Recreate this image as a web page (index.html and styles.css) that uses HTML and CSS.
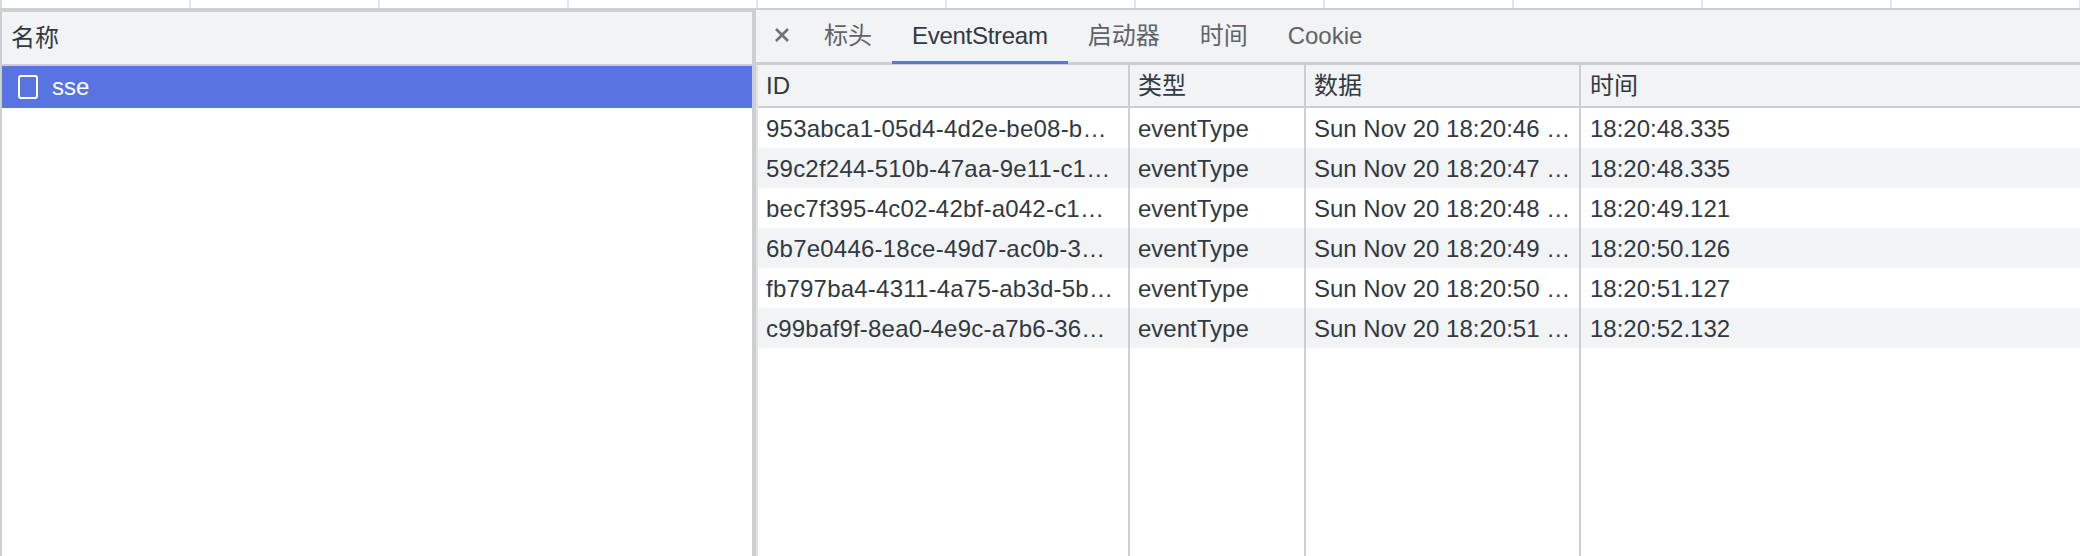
FILE: index.html
```html
<!DOCTYPE html>
<html lang="zh">
<head>
<meta charset="utf-8">
<title>Network</title>
<link rel="stylesheet" href="styles.css">
</head>
<body>
<div class="page">
  <div class="ruler">
    <i></i><i></i><i></i><i></i><i></i><i></i><i></i><i></i><i></i><i></i><i></i>
  </div>
  <div class="split">
    <section class="list">
      <div class="list-head">名称</div>
      <div class="list-row">
        <svg class="file" width="20" height="24" viewBox="0 0 20 24"><rect x="1" y="1" width="18" height="22" rx="2" fill="none" stroke="#fff" stroke-width="2"/></svg>
        <span>sse</span>
      </div>
    </section>
    <section class="detail">
      <div class="tabs">
        <svg class="close" width="14" height="14" viewBox="0 0 14 14"><path d="M1 1L13 13M13 1L1 13" stroke="#6e7379" stroke-width="2.6" fill="none"/></svg>
        <span class="tab first">标头</span>
        <span class="tab active">EventStream</span>
        <span class="tab">启动器</span>
        <span class="tab">时间</span>
        <span class="tab">Cookie</span>
      </div>
      <div class="table">
        <div class="row head"><div>ID</div><div>类型</div><div>数据</div><div>时间</div></div>
        <div class="row"><div class="id">953abca1-05d4-4d2e-be08-b…</div><div>eventType</div><div>Sun Nov 20 18:20:46 …</div><div>18:20:48.335</div></div>
        <div class="row alt"><div class="id">59c2f244-510b-47aa-9e11-c1…</div><div>eventType</div><div>Sun Nov 20 18:20:47 …</div><div>18:20:48.335</div></div>
        <div class="row"><div class="id">bec7f395-4c02-42bf-a042-c1…</div><div>eventType</div><div>Sun Nov 20 18:20:48 …</div><div>18:20:49.121</div></div>
        <div class="row alt"><div class="id">6b7e0446-18ce-49d7-ac0b-3…</div><div>eventType</div><div>Sun Nov 20 18:20:49 …</div><div>18:20:50.126</div></div>
        <div class="row"><div class="id">fb797ba4-4311-4a75-ab3d-5b…</div><div>eventType</div><div>Sun Nov 20 18:20:50 …</div><div>18:20:51.127</div></div>
        <div class="row alt"><div class="id">c99baf9f-8ea0-4e9c-a7b6-36…</div><div>eventType</div><div>Sun Nov 20 18:20:51 …</div><div>18:20:52.132</div></div>
        <div class="rest"><div></div><div></div><div></div><div></div></div>
      </div>
    </section>
  </div>
</div>
</body>
</html>
```
FILE: styles.css
```css
* { box-sizing: border-box; }
html, body { margin: 0; padding: 0; background: #fff; }
.page {
  width: 2080px;
  height: 556px;
  overflow: hidden;
  display: flex;
  flex-direction: column;
  font-family: "Liberation Sans", "Noto Sans CJK SC", sans-serif;
  font-size: 24px;
  color: #303942;
}
.ruler {
  height: 8px;
  flex: none;
  display: flex;
  border-left: 2px solid #d5d9ea;
}
.ruler i {
  flex: none;
  width: 189px;
  border-right: 2px solid #e4e5e8;
}
.split {
  flex: 1;
  display: flex;
  background: #cdced2;
  padding-top: 2px;
  min-height: 0;
}
.list {
  flex: none;
  width: 750px;
  margin: 2px 4px 0 2px;
  background: #fff;
}
.list-head {
  height: 54px;
  padding-left: 9px;
  line-height: 52px;
  background: #f1f3f4;
  border-bottom: 2px solid #cdced2;
}
.list-row {
  height: 42px;
  display: flex;
  align-items: center;
  gap: 14px;
  padding-left: 16px;
  background: #5874e0;
  color: #fff;
}
.file { flex: none; }
.detail {
  flex: 1;
  min-width: 0;
  display: flex;
  flex-direction: column;
  background: #fff;
}
.tabs {
  height: 55px;
  flex: none;
  display: flex;
  align-items: stretch;
  background: #f1f3f4;
  border-bottom: 3px solid #cdced2;
  color: #5f6368;
  padding-left: 19px;
}
.close { align-self: center; flex: none; margin-right: 35px; margin-bottom: 2px; }
.tab {
  padding: 0 20px;
  margin-bottom: -2px;
  border-bottom: 3px solid transparent;
  line-height: 52px;
}
.tab.first { padding-left: 0; }
.tab.active {
  color: #303942;
  letter-spacing: -0.28px;
  border-bottom-color: #5874e0;
}
.table {
  flex: 1;
  min-height: 0;
  display: flex;
  flex-direction: column;
  border-left: 2px solid #e1e2e5;
}
.row, .rest {
  display: grid;
  grid-template-columns: 372px 176px 275px 1fr;
}
.row { height: 40px; flex: none; }
.row > div {
  padding: 1px 0 0 8px;
  line-height: 40px;
  white-space: nowrap;
  overflow: hidden;
  border-right: 2px solid #cdced2;
}
.row > div.id { letter-spacing: 0.22px; }
.row > div:last-child { border-right: 0; padding-left: 9px; }
.row.alt { background: #f1f3f4; }
.row.head {
  height: 43px;
  background: #f1f3f4;
  border-bottom: 2px solid #cdced2;
}
.rest { flex: 1; }
.rest > div { border-right: 2px solid #cdced2; }
.rest > div:last-child { border-right: 0; }
```
